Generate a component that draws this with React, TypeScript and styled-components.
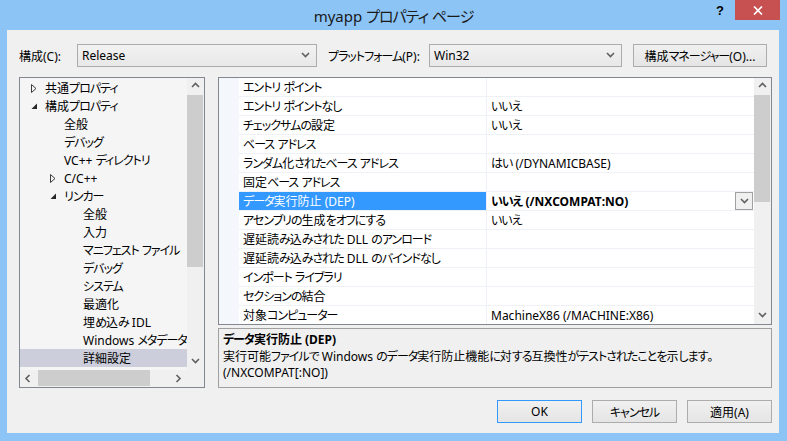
import * as React from 'react'
import styled, { createGlobalStyle } from 'styled-components'

const FRAME = '#8cc4f5'
const FACE = '#f0f0f0'
const BORDER = '#828790'
const FONT = `"Noto Sans", "Noto Sans CJK JP", sans-serif`

const GlobalStyle = createGlobalStyle`
  html, body {
    margin: 0;
    padding: 0;
    background: ${FRAME};
  }
  body {
    font-family: ${FONT};
    font-size: 12px;
    font-feature-settings: "palt" 1;
    color: #000;
  }
`

// Meiryo UI has condensed kana; tighten kana runs to match
const Kana = styled.span`
  font-feature-settings: "palt" 1;
  letter-spacing: -1px;
`

const KANA = /([\u3040-\u30ff]+)/

const Jp = ({ children }: { children: string }) => (
  <span>
    {children.split(KANA).map((part, i) =>
      i % 2 === 1 ? <Kana key={i}>{part}</Kana> : <React.Fragment key={i}>{part}</React.Fragment>
    )}
  </span>
)

const Window = styled.div`
  width: 787px;
  height: 441px;
  background: ${FRAME};
  display: flex;
  flex-direction: column;
  overflow: hidden;
`

const TitleBar = styled.div`
  height: 30px;
  display: grid;
  grid-template-columns: 1fr auto 1fr;
`

const Title = styled.div`
  align-self: center;
  font-size: 15px;
  color: #1a1a1a;
  padding-top: 1px;
`

const Controls = styled.div`
  justify-self: end;
  display: flex;
  align-items: flex-start;
  margin-right: 7px;
`

const HelpGlyph = styled.div`
  width: 20px;
  font-size: 13px;
  font-weight: 700;
  font-family: "Liberation Sans", sans-serif;
  line-height: 22px;
  margin-right: 5px;
  text-align: center;
`

const CloseButton = styled.div`
  width: 45px;
  height: 20px;
  background: #c75050;
  display: flex;
  align-items: center;
  justify-content: center;
`

const Client = styled.div`
  flex: 1;
  margin: 0 8px 8px 7px;
  background: ${FACE};
  display: flex;
  flex-direction: column;
  padding: 14px 7px 10px 12px;
`

const ConfigRow = styled.div`
  display: flex;
  align-items: center;
  height: 23px;
`

const ConfigLabel = styled.div<{ $w: number }>`
  width: ${p => p.$w}px;
  white-space: nowrap;
`

const Select = styled.div<{ $w: number; $gap?: number }>`
  width: ${p => p.$w}px;
  height: 23px;
  box-sizing: border-box;
  border: 1px solid #acacac;
  background: linear-gradient(#f2f2f2, #e8e8e8);
  display: flex;
  align-items: center;
  padding: 0 6px 0 4px;
  margin-right: ${p => p.$gap ?? 0}px;
`

const SelectText = styled.div`
  flex: 1;
`

const PushButton = styled.div<{ $w: number; $focus?: boolean }>`
  width: ${p => p.$w}px;
  height: 23px;
  box-sizing: border-box;
  border: 1px solid ${p => (p.$focus ? '#3399ff' : '#acacac')};
  background: linear-gradient(#f0f0f0, #e5e5e5);
  display: flex;
  align-items: center;
  justify-content: center;
  white-space: nowrap;
`

const Main = styled.div`
  display: flex;
  height: 311px;
  margin-top: 10px;
`

const TreeBox = styled.div`
  width: 186px;
  box-sizing: border-box;
  border: 1px solid ${BORDER};
  background: #f5f5f5;
  display: flex;
  flex-direction: column;
  margin-right: 13px;
`

const TreeTop = styled.div`
  flex: 1;
  display: flex;
  min-height: 0;
`

const TreeList = styled.div`
  flex: 1;
  padding-top: 1px;
  overflow: hidden;
`

const TreeRow = styled.div<{ $level: number; $selected?: boolean }>`
  height: 18px;
  display: flex;
  align-items: center;
  padding-left: ${p => 11 + p.$level * 19}px;
  background: ${p => (p.$selected ? '#cccedb' : 'transparent')};
  white-space: nowrap;
`

const Expander = styled.div`
  width: 14px;
  flex: none;
  display: flex;
  align-items: center;
`

const TreeBottom = styled.div`
  height: 17px;
  display: flex;
`

const Corner = styled.div`
  width: 17px;
  background: ${FACE};
`

const VScroll = styled.div`
  width: 17px;
  background: ${FACE};
  display: flex;
  flex-direction: column;
`

const HScroll = styled.div`
  flex: 1;
  background: ${FACE};
  display: flex;
`

const ArrowCell = styled.div`
  width: 17px;
  height: 17px;
  flex: none;
  display: flex;
  align-items: center;
  justify-content: center;
`

const Track = styled.div<{ $dir: 'v' | 'h' }>`
  flex: 1;
  display: flex;
  flex-direction: ${p => (p.$dir === 'v' ? 'column' : 'row')};
`

const Thumb = styled.div<{ $dir: 'v' | 'h'; $size: number; $offset?: number }>`
  background: #cdcdcd;
  ${p =>
    p.$dir === 'v'
      ? `height: ${p.$size}px; margin: ${p.$offset ?? 0}px 1px 0 0;`
      : `width: ${p.$size}px; margin: 0 0 1px ${p.$offset ?? 0}px;`}
`

const RightCol = styled.div`
  flex: 1;
  display: flex;
  flex-direction: column;
`

const GridBox = styled.div`
  height: 248px;
  box-sizing: border-box;
  border: 1px solid ${BORDER};
  background: #fff;
  display: flex;
`

const GridBody = styled.div`
  flex: 1;
  overflow: hidden;
`

const GridRow = styled.div`
  height: 19px;
  display: flex;
`

const Gutter = styled.div`
  width: 20px;
  background: #f4f7fc;
`

const NameCell = styled.div<{ $selected?: boolean }>`
  width: 248px;
  box-sizing: border-box;
  border-right: 1px solid #eef1f6;
  border-bottom: 1px solid #eef1f6;
  background: ${p => (p.$selected ? '#3399ff' : '#fff')};
  color: ${p => (p.$selected ? '#fff' : '#000')};
  padding: 0 4px;
  display: flex;
  align-items: center;
  white-space: nowrap;
`

const ValueCell = styled.div<{ $bold?: boolean }>`
  flex: 1;
  box-sizing: border-box;
  border-bottom: 1px solid #eef1f6;
  padding: 0 1px 0 4px;
  display: flex;
  align-items: center;
  font-weight: ${p => (p.$bold ? 700 : 400)};
  white-space: nowrap;
`

const ValueText = styled.div`
  flex: 1;
`

const DropButton = styled.div`
  width: 18px;
  height: 18px;
  box-sizing: border-box;
  border: 1px solid #a0a0a0;
  background: ${FACE};
  display: flex;
  align-items: center;
  justify-content: center;
`

const DescBox = styled.div`
  height: 60px;
  margin-top: 3px;
  box-sizing: border-box;
  border: 1px solid #a0a0a0;
  padding: 3px 4px;
  line-height: 16px;
`

const DescTitle = styled.div`
  font-weight: 700;
  margin-bottom: 1px;
`

const ButtonRow = styled.div`
  display: flex;
  justify-content: flex-end;
  gap: 10px;
  margin-top: 12px;
`

const Chevron = ({ dir, color = '#606060' }: { dir: 'up' | 'down' | 'left' | 'right'; color?: string }) => {
  const d = {
    up: 'M1 5 L4.5 1.5 L8 5',
    down: 'M1 2 L4.5 5.5 L8 2',
    left: 'M5.5 1 L2 4.5 L5.5 8',
    right: 'M2.5 1 L6 4.5 L2.5 8',
  }[dir]
  return (
    <svg width="9" height="9" viewBox="0 0 9 9">
      <path d={d} fill="none" stroke={color} strokeWidth="1.6" />
    </svg>
  )
}

const Collapsed = () => (
  <svg width="6" height="9" viewBox="0 0 6 9">
    <path d="M0.5 0.5 L5 4.5 L0.5 8.5 Z" fill="none" stroke="#3c3c3c" strokeWidth="1" />
  </svg>
)

const Expanded = () => (
  <svg width="7" height="7" viewBox="0 0 7 7">
    <path d="M6 0.5 L6 6 L0.5 6 Z" fill="#262626" />
  </svg>
)

type TreeItem = { label: string; level: number; state?: 'open' | 'closed'; selected?: boolean }

const treeItems: TreeItem[] = [
  { label: '共通プロパティ', level: 0, state: 'closed' },
  { label: '構成プロパティ', level: 0, state: 'open' },
  { label: '全般', level: 1 },
  { label: 'デバッグ', level: 1 },
  { label: 'VC++ ディレクトリ', level: 1 },
  { label: 'C/C++', level: 1, state: 'closed' },
  { label: 'リンカー', level: 1, state: 'open' },
  { label: '全般', level: 2 },
  { label: '入力', level: 2 },
  { label: 'マニフェスト ファイル', level: 2 },
  { label: 'デバッグ', level: 2 },
  { label: 'システム', level: 2 },
  { label: '最適化', level: 2 },
  { label: '埋め込み IDL', level: 2 },
  { label: 'Windows メタデータ', level: 2 },
  { label: '詳細設定', level: 2, selected: true },
]

type Prop = { name: string; value?: string; selected?: boolean }

const props: Prop[] = [
  { name: 'エントリ ポイント' },
  { name: 'エントリ ポイントなし', value: 'いいえ' },
  { name: 'チェックサムの設定', value: 'いいえ' },
  { name: 'ベース アドレス' },
  { name: 'ランダム化されたベース アドレス', value: 'はい (/DYNAMICBASE)' },
  { name: '固定ベース アドレス' },
  { name: 'データ実行防止 (DEP)', value: 'いいえ (/NXCOMPAT:NO)', selected: true },
  { name: 'アセンブリの生成をオフにする', value: 'いいえ' },
  { name: '遅延読み込みされた DLL のアンロード' },
  { name: '遅延読み込みされた DLL のバインドなし' },
  { name: 'インポート ライブラリ' },
  { name: 'セクションの結合' },
  { name: '対象コンピューター', value: 'MachineX86 (/MACHINE:X86)' },
]

const VerticalBar = ({ thumb, offset = 0 }: { thumb: number; offset?: number }) => (
  <VScroll>
    <ArrowCell>
      <Chevron dir="up" />
    </ArrowCell>
    <Track $dir="v">
      <Thumb $dir="v" $size={thumb} $offset={offset} />
    </Track>
    <ArrowCell>
      <Chevron dir="down" />
    </ArrowCell>
  </VScroll>
)

const App = () => (
  <>
    <GlobalStyle />
    <Window>
      <TitleBar>
        <div />
        <Title>
          <Jp>myapp プロパティ ページ</Jp>
        </Title>
        <Controls>
          <HelpGlyph>?</HelpGlyph>
          <CloseButton>
            <svg width="10" height="9" viewBox="0 0 10 9">
              <path d="M1 0.5 L9 8.5 M9 0.5 L1 8.5" stroke="#fff" strokeWidth="1.7" />
            </svg>
          </CloseButton>
        </Controls>
      </TitleBar>

      <Client>
        <ConfigRow>
          <ConfigLabel $w={58}>構成(C):</ConfigLabel>
          <Select $w={240} $gap={11}>
            <SelectText>Release</SelectText>
            <Chevron dir="down" />
          </Select>
          <ConfigLabel $w={101}>
            <Jp>プラットフォーム(P):</Jp>
          </ConfigLabel>
          <Select $w={193} $gap={11}>
            <SelectText>Win32</SelectText>
            <Chevron dir="down" />
          </Select>
          <PushButton $w={134}>
            <Jp>構成マネージャー(O)...</Jp>
          </PushButton>
        </ConfigRow>

        <Main>
          <TreeBox>
            <TreeTop>
              <TreeList>
                {treeItems.map((item, i) => (
                  <TreeRow key={i} $level={item.level} $selected={item.selected}>
                    <Expander>
                      {item.state === 'closed' && <Collapsed />}
                      {item.state === 'open' && <Expanded />}
                    </Expander>
                    <Jp>{item.label}</Jp>
                  </TreeRow>
                ))}
              </TreeList>
              <VerticalBar thumb={172} />
            </TreeTop>
            <TreeBottom>
              <HScroll>
                <ArrowCell>
                  <Chevron dir="left" />
                </ArrowCell>
                <Track $dir="h">
                  <Thumb $dir="h" $size={112} $offset={1} />
                </Track>
                <ArrowCell>
                  <Chevron dir="right" />
                </ArrowCell>
              </HScroll>
              <Corner />
            </TreeBottom>
          </TreeBox>

          <RightCol>
            <GridBox>
              <GridBody>
                {props.map((p, i) => (
                  <GridRow key={i}>
                    <Gutter />
                    <NameCell $selected={p.selected}>
                      <Jp>{p.name}</Jp>
                    </NameCell>
                    <ValueCell $bold={p.selected}>
                      <ValueText>
                        <Jp>{p.value ?? ''}</Jp>
                      </ValueText>
                      {p.selected && (
                        <DropButton>
                          <Chevron dir="down" />
                        </DropButton>
                      )}
                    </ValueCell>
                  </GridRow>
                ))}
              </GridBody>
              <VerticalBar thumb={107} />
            </GridBox>
            <DescBox>
              <DescTitle>
                <Jp>データ実行防止 (DEP)</Jp>
              </DescTitle>
              <div>
                <Jp>実行可能ファイルで Windows のデータ実行防止機能に対する互換性がテストされたことを示します。</Jp>
              </div>
              <div>(/NXCOMPAT[:NO])</div>
            </DescBox>
          </RightCol>
        </Main>

        <ButtonRow>
          <PushButton $w={85} $focus>
            OK
          </PushButton>
          <PushButton $w={85}>
            <Jp>キャンセル</Jp>
          </PushButton>
          <PushButton $w={85}>適用(A)</PushButton>
        </ButtonRow>
      </Client>
    </Window>
  </>
)

export default App
